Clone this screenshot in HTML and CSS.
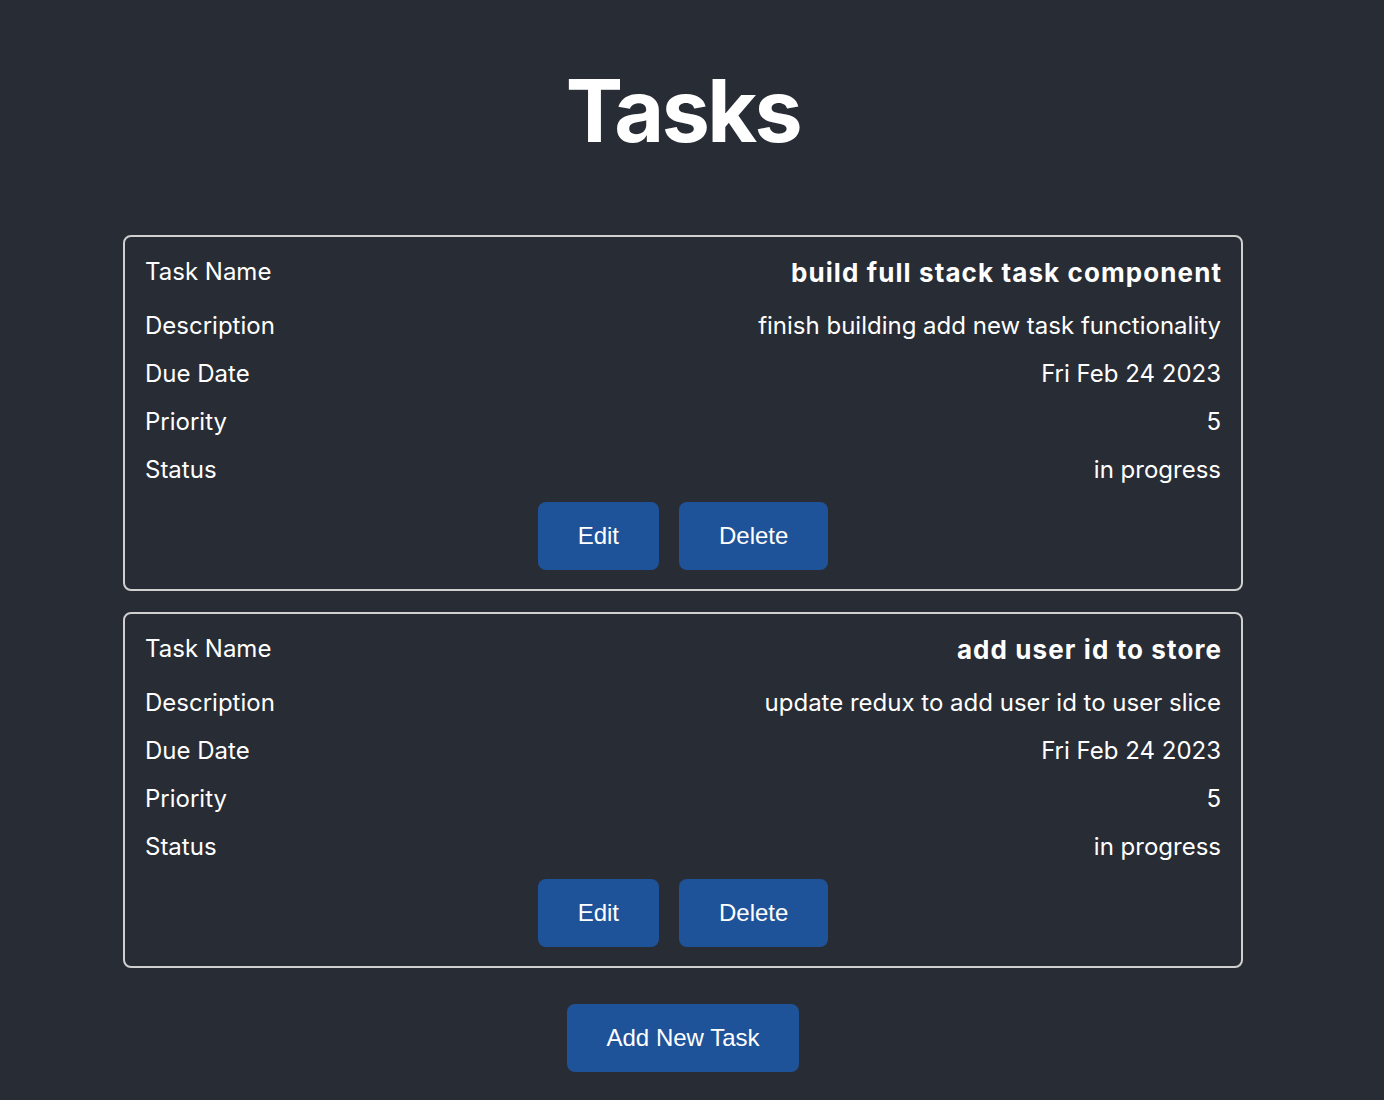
FILE: index.html
```html
<!DOCTYPE html>
<html lang="en">
<head>
<meta charset="utf-8">
<title>Tasks</title>
<link rel="stylesheet" href="styles.css">
</head>
<body>
<div class="page">
  <h1 class="title">Tasks</h1>
  <div class="list">
    <div class="card">
      <div class="row name-row"><span class="label">Task Name</span><span class="name">build full stack task component</span></div>
      <div class="row"><span class="label">Description</span><span class="value">finish building add new task functionality</span></div>
      <div class="row"><span class="label">Due Date</span><span class="value">Fri Feb 24 2023</span></div>
      <div class="row"><span class="label">Priority</span><span class="value">5</span></div>
      <div class="row"><span class="label">Status</span><span class="value">in progress</span></div>
      <div class="actions"><button class="btn">Edit</button><button class="btn">Delete</button></div>
    </div>
    <div class="card">
      <div class="row name-row"><span class="label">Task Name</span><span class="name">add user id to store</span></div>
      <div class="row"><span class="label">Description</span><span class="value">update redux to add user id to user slice</span></div>
      <div class="row"><span class="label">Due Date</span><span class="value">Fri Feb 24 2023</span></div>
      <div class="row"><span class="label">Priority</span><span class="value">5</span></div>
      <div class="row"><span class="label">Status</span><span class="value">in progress</span></div>
      <div class="actions"><button class="btn">Edit</button><button class="btn">Delete</button></div>
    </div>
  </div>
  <div class="actions add"><button class="btn">Add New Task</button></div>
</div>
</body>
</html>
```
FILE: styles.css
```css
html, body {
  margin: 0;
  padding: 0;
  background: #282c34;
}
body {
  font-family: Inter, "Noto Sans", sans-serif;
  color: #ffffff;
}
.page {
  width: 1366px;
  padding-top: 59px;
  padding-bottom: 28px;
}
.title {
  margin: 0 0 72px;
  text-align: center;
  font-size: 86px;
  font-weight: 700;
  letter-spacing: -0.03em;
  line-height: normal;
}
.list {
  display: flex;
  flex-direction: column;
  gap: 21px;
  width: 1120px;
  margin: 0 auto;
}
.card {
  border: 2px solid #d0d0d0;
  border-radius: 8px;
  padding: 11px 20px 19px 20px;
}
.row {
  display: flex;
  justify-content: space-between;
  align-items: flex-start;
  font-size: 24px;
  line-height: 48px;
}
.name-row {
  height: 54px;
}
.name {
  font-size: 26px;
  font-weight: 700;
  letter-spacing: 1.1px;
  line-height: 50px;
  margin-right: -1.1px;
}
.actions {
  display: flex;
  justify-content: center;
  gap: 20px;
  margin-top: 8px;
}
.add {
  margin-top: 36px;
}
.btn {
  font-family: "Liberation Sans", Arial, sans-serif;
  font-size: 24px;
  color: #ffffff;
  background: #1f5399;
  border: none;
  border-radius: 8px;
  padding: 20px 40px;
  line-height: 28px;
}
```
